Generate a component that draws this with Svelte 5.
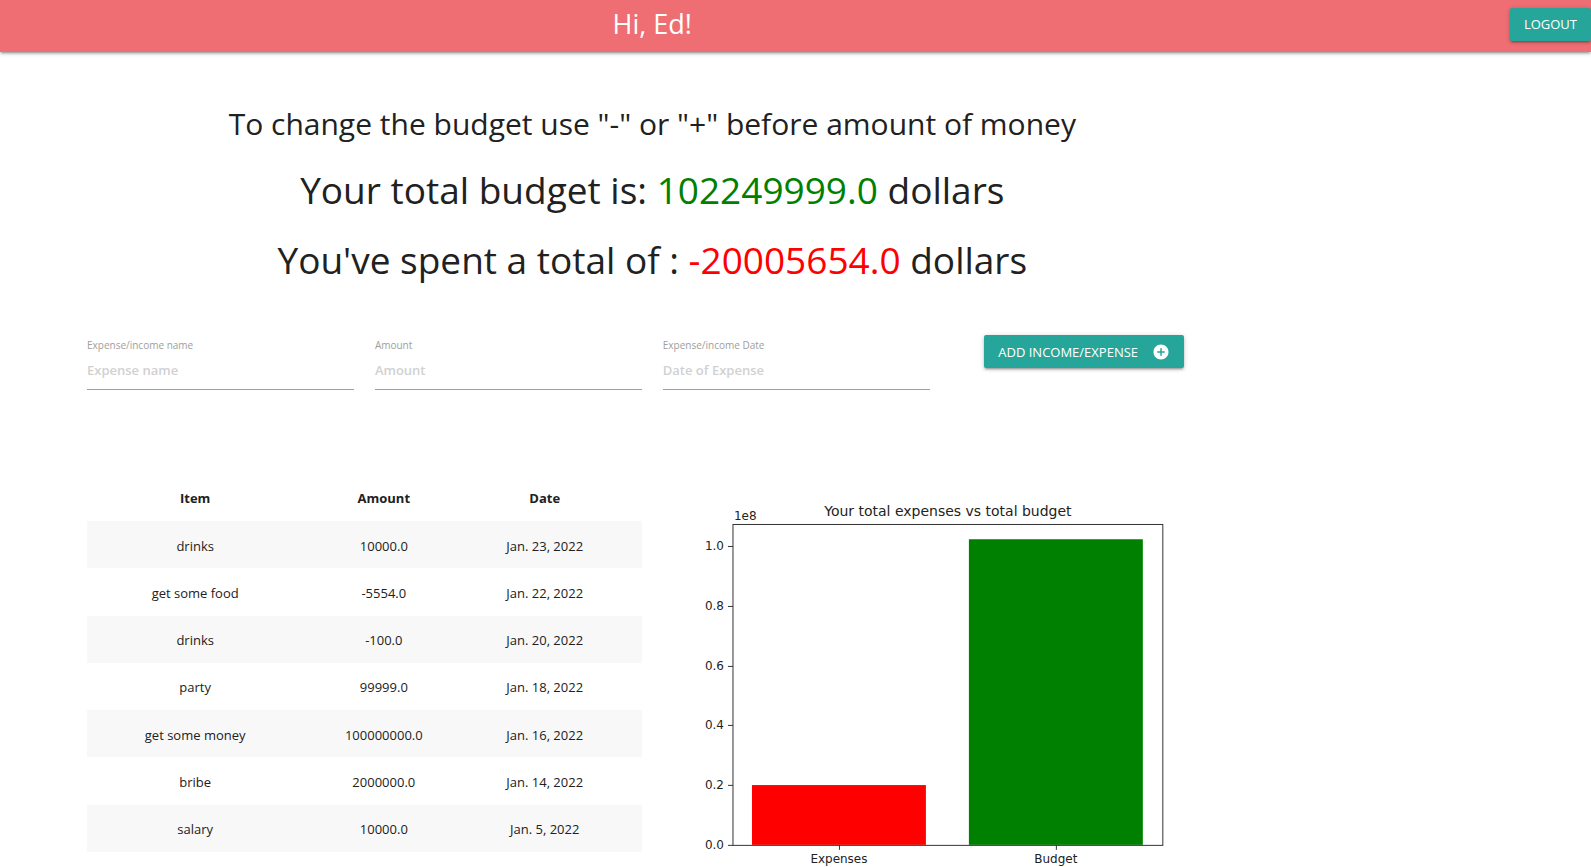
<script>
  const user = 'Ed';
  const budget = '102249999.0';
  const spent = '-20005654.0';

  const fields = [
    { id: 'name', label: 'Expense/income name', placeholder: 'Expense name' },
    { id: 'amount', label: 'Amount', placeholder: 'Amount' },
    { id: 'date', label: 'Expense/income Date', placeholder: 'Date of Expense' }
  ];

  const rows = [
    ['drinks', '10000.0', 'Jan. 23, 2022'],
    ['get some food', '-5554.0', 'Jan. 22, 2022'],
    ['drinks', '-100.0', 'Jan. 20, 2022'],
    ['party', '99999.0', 'Jan. 18, 2022'],
    ['get some money', '100000000.0', 'Jan. 16, 2022'],
    ['bribe', '2000000.0', 'Jan. 14, 2022'],
    ['salary', '10000.0', 'Jan. 5, 2022']
  ];

  const base = 371;
  const unit = 299;
  const ticks = [0, 0.2, 0.4, 0.6, 0.8, 1].map((v) => ({
    text: v.toFixed(1),
    y: Math.round(base - v * unit) + 0.5
  }));
  const bars = [
    { name: 'Expenses', x: 89, value: 0.20005654, color: '#ff0000' },
    { name: 'Budget', x: 306, value: 1.02249999, color: '#008000' }
  ];
  const barWidth = 174;
</script>

<nav>
  <div class="brand">Hi, {user}!</div>
  <button class="btn logout" type="button">LOGOUT</button>
</nav>

<main>
  <header>
    <h2>To change the budget use "-" or "+" before amount of money</h2>
    <h1>Your total budget is: <span class="green">{budget}</span> dollars</h1>
    <h1>You've spent a total of : <span class="red">{spent}</span> dollars</h1>
  </header>

  <form class="entry" onsubmit={(e) => e.preventDefault()}>
    {#each fields as f}
      <div class="field">
        <label for={f.id}>{f.label}</label>
        <input id={f.id} type="text" placeholder={f.placeholder} />
      </div>
    {/each}
    <div class="action">
      <button class="btn" type="submit">
        ADD INCOME/EXPENSE
        <svg width="18" height="18" viewBox="0 0 24 24" aria-hidden="true">
          <path fill="#fff" d="M12 2C6.48 2 2 6.48 2 12s4.480 10 10 10 10-4.480 10-10S17.520 2 12 2zm5 11h-4v4h-2v-4H7v-2h4V7h2v4h4v2z" />
        </svg>
      </button>
    </div>
  </form>

  <section class="report">
    <table>
      <thead>
        <tr><th class="item">Item</th><th class="mid">Amount</th><th class="mid">Date</th><td></td></tr>
      </thead>
      <tbody>
        {#each rows as row}
          <tr>
            {#each row as cell}<td>{cell}</td>{/each}
            <td></td>
          </tr>
        {/each}
      </tbody>
    </table>

    <svg class="chart" viewBox="0 0 555 393" role="img" aria-label="Your total expenses vs total budget">
      <text class="title" x="285" y="42" text-anchor="middle">Your total expenses vs total budget</text>
      <text x="71" y="46">1e8</text>
      {#each bars as b}
        <rect x={b.x} y={base - b.value * unit} width={barWidth} height={b.value * unit} fill={b.color} />
        <path d="M{b.x + barWidth / 2 + 0.5} {base}v5" />
        <text x={b.x + barWidth / 2} y="389" text-anchor="middle">{b.name}</text>
      {/each}
      <rect class="frame" x="70" y="50.5" width="430" height="321" />
      {#each ticks as t}
        <path d="M65 {t.y}h5" />
        <text x="61" y={t.y + 4} text-anchor="end">{t.text}</text>
      {/each}
    </svg>
  </section>
</main>

<style>
  :global(body) {
    margin: 0;
    background: #fff;
    color: #212121;
    font-family: "Open Sans", "Noto Sans", sans-serif;
    font-size: 14px;
  }

  nav {
    display: flex;
    align-items: center;
    justify-content: space-between;
    height: 52px;
    background: #ee6e73;
    box-shadow: 0 2px 2px rgba(0, 0, 0, 0.14), 0 3px 1px -2px rgba(0, 0, 0, 0.12), 0 1px 5px rgba(0, 0, 0, 0.2);
  }

  .brand {
    width: 82%;
    padding-bottom: 4px;
    color: #fff;
    font-size: 27px;
    line-height: 44px;
    text-align: center;
  }

  .btn {
    display: inline-flex;
    align-items: center;
    gap: 14px;
    height: 33px;
    padding: 0 14px;
    border: 0;
    border-radius: 2px;
    background: #26a69a;
    color: #fff;
    font-family: inherit;
    font-size: 13px;
    white-space: nowrap;
    cursor: pointer;
    box-shadow: 0 2px 2px rgba(0, 0, 0, 0.14), 0 3px 1px -2px rgba(0, 0, 0, 0.12), 0 1px 5px rgba(0, 0, 0, 0.2);
  }

  .logout {
    margin-bottom: 4px;
  }

  main {
    box-sizing: border-box;
    width: 82%;
    padding: 50px 87px 0;
  }

  header {
    text-align: center;
    white-space: nowrap;
  }

  h1,
  h2 {
    margin: 0 0 26px;
    font-weight: 400;
    line-height: 44px;
  }

  h1 {
    font-size: 37px;
  }

  h2 {
    margin-bottom: 22px;
    font-size: 30px;
  }

  .green {
    color: #008000;
  }

  .red {
    color: #ff0000;
  }

  .entry {
    display: grid;
    grid-template-columns: repeat(4, minmax(0, 1fr));
    column-gap: 21px;
    margin-top: 53px;
  }

  .field {
    display: flex;
    flex-direction: column;
    padding-top: 2px;
  }

  label {
    color: #9e9e9e;
    font-size: 10px;
    line-height: 16px;
  }

  input {
    box-sizing: border-box;
    width: 100%;
    height: 37px;
    padding: 0 0 2px;
    border: 0;
    border-bottom: 1px solid #9e9e9e;
    outline: none;
    background: transparent;
    font-family: inherit;
    font-size: 13px;
    font-weight: 600;
  }

  input::placeholder {
    color: #d1d1d1;
    opacity: 1;
  }

  .action {
    text-align: center;
  }

  .report {
    display: grid;
    grid-template-columns: repeat(2, minmax(0, 1fr));
    column-gap: 21px;
    align-items: start;
    margin-top: 84px;
  }

  table {
    width: 100%;
    height: 378px;
    table-layout: fixed;
    border-collapse: collapse;
    text-align: center;
    font-size: 13px;
    line-height: 18px;
  }

  th,
  td {
    padding: 15px 0 13px;
  }

  th {
    padding-bottom: 14px;
  }

  .item {
    width: 39%;
  }

  .mid {
    width: 29%;
  }

  tbody tr:nth-child(odd) {
    background: #f8f8f8;
  }

  .chart {
    display: block;
    width: 100%;
    font-family: "DejaVu Sans", sans-serif;
    font-size: 12px;
    fill: #222;
  }

  .title {
    font-size: 14px;
  }

  .frame {
    fill: none;
    stroke: #333;
  }

  .chart path {
    stroke: #333;
  }
</style>
